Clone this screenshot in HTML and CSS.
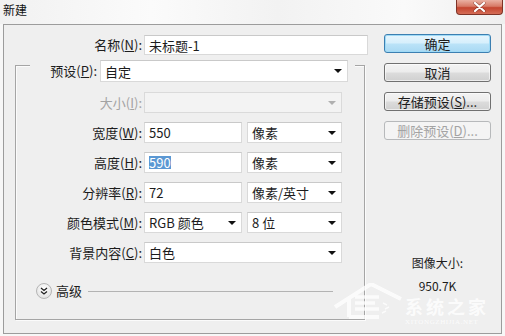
FILE: index.html
```html
<!DOCTYPE html>
<html lang="zh-CN">
<head>
  <meta charset="UTF-8" />
  <title>新建</title>
  <link rel="stylesheet" href="styles.css">
</head>
<body>
  <div class="titlebar">
    <span class="title">新建</span>
    <span class="close">
      <svg width="13" height="10" viewBox="0 0 13 10">
        <path d="M2 1 L11 9 M11 1 L2 9" stroke="#5a1d14" stroke-width="3.4" stroke-linecap="round" opacity="0.45"/>
        <path d="M2 1 L11 9 M11 1 L2 9" stroke="#fff" stroke-width="2.2" stroke-linecap="round"/>
      </svg>
    </span>
  </div>

  <div class="dialog">
    <div class="main">
      <div class="name-row">
        <label class="lbl name-lbl">名称(<u>N</u>):</label>
        <div class="field name-field">未标题-1</div>
      </div>

      <div class="group">
        <div class="preset-row">
          <label class="lbl preset-lbl">预设(<u>P</u>):</label>
          <div class="field select preset-select"><span>自定</span><i class="arrow"></i></div>
        </div>

        <div class="row">
          <label class="lbl off">大小(<u>I</u>):</label>
          <div class="field select wide off"><span></span><i class="arrow"></i></div>
        </div>

        <div class="row">
          <label class="lbl">宽度(<u>W</u>):</label>
          <div class="field mid">550</div>
          <div class="field select unit"><span>像素</span><i class="arrow"></i></div>
        </div>

        <div class="row">
          <label class="lbl">高度(<u>H</u>):</label>
          <div class="field mid"><span class="sel">590</span></div>
          <div class="field select unit"><span>像素</span><i class="arrow"></i></div>
        </div>

        <div class="row">
          <label class="lbl">分辨率(<u>R</u>):</label>
          <div class="field mid">72</div>
          <div class="field select unit"><span>像素/英寸</span><i class="arrow"></i></div>
        </div>

        <div class="row">
          <label class="lbl">颜色模式(<u>M</u>):</label>
          <div class="field select mid"><span>RGB 颜色</span><i class="arrow"></i></div>
          <div class="field select unit"><span>8 位</span><i class="arrow"></i></div>
        </div>

        <div class="row">
          <label class="lbl">背景内容(<u>C</u>):</label>
          <div class="field select wide"><span>白色</span><i class="arrow"></i></div>
        </div>

        <div class="advanced">
          <span class="adv-icon">
            <svg width="8" height="8" viewBox="0 0 8 8">
              <path d="M1 1 L4 3.5 L7 1 M1 4.5 L4 7 L7 4.5" fill="none" stroke="#222" stroke-width="1.3"/>
            </svg>
          </span>
          <span class="adv-text">高级</span>
          <span class="adv-line"></span>
        </div>
      </div>
    </div>

    <div class="side">
      <button class="btn default">确定</button>
      <button class="btn">取消</button>
      <button class="btn">存储预设(<u>S</u>)...</button>
      <button class="btn off">删除预设(<u>D</u>)...</button>
      <div class="size-info">
        <div>图像大小:</div>
        <div class="size-val">950.7K</div>
      </div>
    </div>
  </div>

  <div class="watermark">
    <svg class="wm-logo" width="70" height="36" viewBox="0 0 70 36">
      <path d="M2 24 L38 1 L68 16" fill="none" stroke="#fff" stroke-width="4"/>
      <path d="M16 16 L16 34 M16 34 L46 34" fill="none" stroke="#fff" stroke-width="4"/>
      <path d="M22 14 L46 14 M22 20 L42 20 M22 26 L46 26" fill="none" stroke="#fff" stroke-width="3.5"/>
      <path d="M50 20 L54 22 M52 26 L56 24 M49 30 L53 28" fill="none" stroke="#fff" stroke-width="1.5"/>
    </svg>
    <div class="wm-text">
      <div class="wm-cn">系统之家</div>
      <div class="wm-en">XITONGZHIJIA.NET</div>
    </div>
  </div>
</body>
</html>
```

FILE: styles.css
```css
* {
  margin: 0;
  padding: 0;
  box-sizing: border-box;
}

body {
  width: 505px;
  height: 336px;
  overflow: hidden;
  position: relative;
  font-family: "Noto Sans CJK SC", "Noto Sans", sans-serif;
  font-size: 13px;
  color: #1c1c1c;
  background: #f7f7f7;
}

u {
  text-decoration: underline;
  text-underline-offset: 1px;
}

/* title bar */
.titlebar {
  height: 24px;
  display: flex;
  justify-content: space-between;
  align-items: flex-start;
  background: linear-gradient(to right, #f1f1f1, #fbfbfb 30%, #f2f2f2 55%, #fafafa 80%, #efefef);
}

.title {
  font-size: 12px;
  line-height: 20px;
  padding-left: 3px;
  color: #111;
}

.close {
  width: 47px;
  height: 15px;
  margin-right: 2px;
  border: 1px solid #7e3327;
  border-top: none;
  border-radius: 0 0 4px 4px;
  background: linear-gradient(#eab1a3, #d77a66 45%, #c4452f 55%, #d46d57);
  display: flex;
  align-items: center;
  justify-content: center;
}

/* dialog body */
.dialog {
  margin-left: 3px;
  width: 499px;
  height: 310px;
  border: 1px solid #9c9c9c;
  background: #efefef;
  display: flex;
}

.main {
  width: 366px;
  padding-top: 10px;
}

.lbl {
  text-align: right;
  line-height: 20px;
  white-space: nowrap;
}

.lbl.off,
.btn.off,
.field.off {
  color: #a3a3a3;
}

.name-row {
  display: flex;
  align-items: center;
  height: 20px;
}

.name-lbl {
  width: 138px;
  margin-right: 2px;
}

.field {
  height: 21px;
  background: #fff;
  border: 1px solid #d9d9d9;
  border-top-color: #c9c9c9;
  padding-left: 4px;
  line-height: 19px;
  display: flex;
  align-items: center;
  white-space: nowrap;
}

.field.off {
  background: #f3f3f3;
  border-color: #dadada;
}

.name-field {
  width: 224px;
  height: 20px;
}

.select span {
  flex: 1;
}

.arrow {
  width: 0;
  height: 0;
  margin-right: 5px;
  border-left: 4px solid transparent;
  border-right: 4px solid transparent;
  border-top: 4px solid #111;
}

.field.off .arrow {
  border-top-color: #b0b0b0;
}

.sel {
  background: #5b98d3;
  color: #fff;
  line-height: 13px;
}

/* group box */
.group {
  margin: 10px 0 0 11px;
  width: 350px;
  height: 255px;
  border: 1px solid #a5a5a5;
  box-shadow: inset 1px 1px 0 #fbfbfb, 1px 1px 0 #fbfbfb;
}

.preset-row {
  margin: -6px 0 0 14px;
  width: 325px;
  height: 22px;
  padding-right: 7px;
  display: flex;
  align-items: center;
  background: #efefef;
}

.preset-lbl {
  width: 67px;
  margin-right: 3px;
}

.preset-select {
  width: 248px;
  height: 22px;
}

.row {
  display: flex;
  align-items: center;
  height: 21px;
  margin-top: 9px;
}

.preset-row + .row {
  margin-top: 10px;
}

.row .lbl {
  width: 126px;
  margin-right: 2px;
}

.field.mid {
  width: 98px;
}

.field.unit {
  width: 95px;
  margin-left: 5px;
}

.field.wide {
  width: 198px;
}

.advanced {
  display: flex;
  align-items: center;
  margin: 20px 0 0 20px;
  height: 16px;
}

.adv-icon {
  width: 16px;
  height: 16px;
  border-radius: 50%;
  border: 1px solid #b5b5b5;
  background: radial-gradient(circle at 50% 35%, #ffffff, #e6e6e6 70%, #d2d2d2);
  display: flex;
  align-items: center;
  justify-content: center;
}

.adv-text {
  margin-left: 4px;
  line-height: 16px;
}

.adv-line {
  margin-left: 6px;
  width: 245px;
  height: 1px;
  background: #b3b3b3;
}

/* right column */
.side {
  width: 107px;
  margin-left: 14px;
  padding-top: 9px;
  display: flex;
  flex-direction: column;
  gap: 10px;
}

.btn {
  height: 19px;
  font-family: inherit;
  font-size: 13px;
  line-height: 17px;
  color: #1c1c1c;
  border: 1px solid #707070;
  border-radius: 3px;
  background: linear-gradient(#f3f3f3, #ececec 48%, #dcdcdc 52%, #d0d0d0);
  box-shadow: inset 0 0 0 1px rgba(255, 255, 255, 0.6);
}

.btn.default {
  border-color: #3c7fb1;
  background: linear-gradient(#e6f5fd, #d6effc 48%, #bbe3f8 52%, #a9d9f3);
  box-shadow: inset 0 0 0 1px #9fdaf6;
}

.btn.off {
  border-color: #b7b9bb;
  background: #f4f4f4;
  box-shadow: none;
}

.size-info {
  margin-top: 105px;
  text-align: center;
  font-size: 12px;
  line-height: 16px;
}

.size-val {
  margin-top: 8px;
  line-height: 14px;
}

/* watermark overlay */
.watermark {
  position: absolute;
  left: 333px;
  top: 283px;
  display: flex;
  align-items: flex-start;
  opacity: 0.8;
}

.wm-text {
  margin-left: 2px;
  color: #fff;
}

.wm-cn {
  font-size: 18px;
  line-height: 24px;
  font-weight: bold;
  margin-top: 11px;
  letter-spacing: 3px;
}

.wm-en {
  font-family: "Liberation Serif", serif;
  font-size: 7px;
  line-height: 8px;
  letter-spacing: 0.6px;
}
```
